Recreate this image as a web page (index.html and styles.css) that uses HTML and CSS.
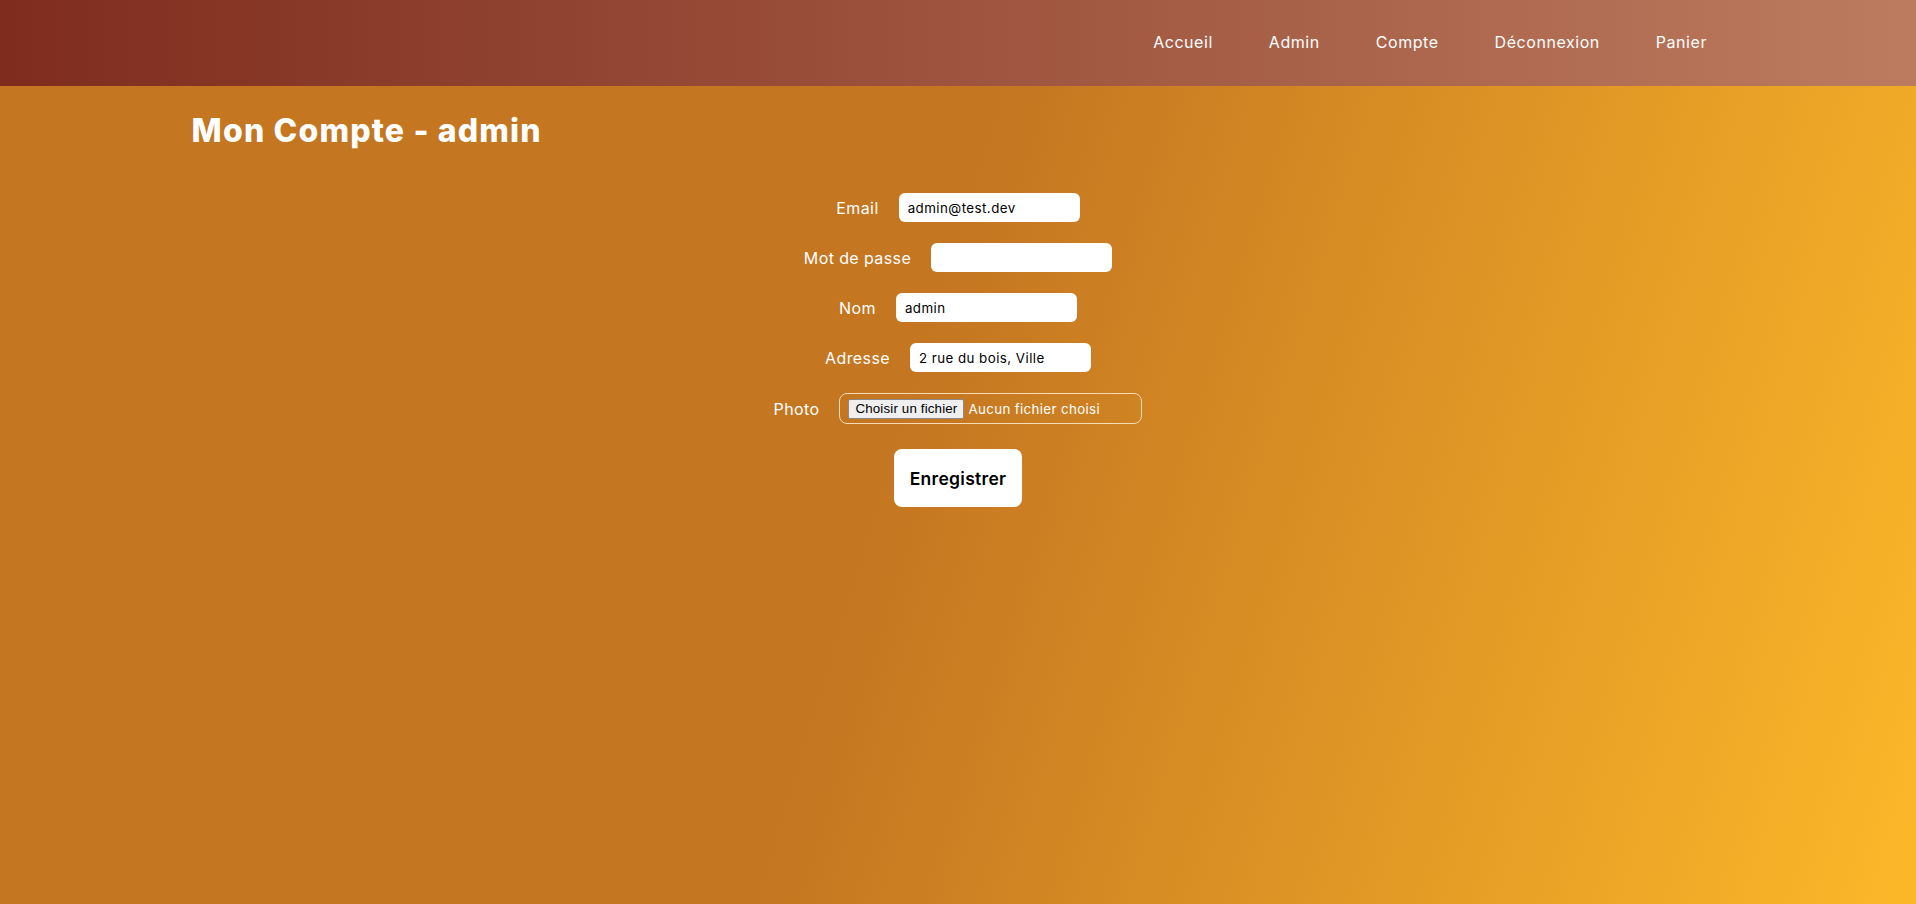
FILE: index.html
```html
<!DOCTYPE html>
<html lang="fr">
<head>
<meta charset="utf-8">
<title>Mon Compte - admin</title>
<link rel="stylesheet" href="styles.css">
</head>
<body>
<div class="page">
  <header class="topbar">
    <nav class="nav">
      <a class="nav-link" href="#">Accueil</a>
      <a class="nav-link" href="#">Admin</a>
      <a class="nav-link" href="#">Compte</a>
      <a class="nav-link" href="#">Déconnexion</a>
      <a class="nav-link" href="#">Panier</a>
    </nav>
  </header>
  <main class="content">
    <h1 class="title">Mon Compte - admin</h1>
    <form class="account-form">
      <div class="row">
        <label class="row-label" for="email">Email</label>
        <input class="text-input" id="email" type="email" value="admin@test.dev">
      </div>
      <div class="row">
        <label class="row-label" for="pass">Mot de passe</label>
        <input class="text-input" id="pass" type="password" value="">
      </div>
      <div class="row">
        <label class="row-label" for="nom">Nom</label>
        <input class="text-input" id="nom" type="text" value="admin">
      </div>
      <div class="row">
        <label class="row-label" for="adresse">Adresse</label>
        <input class="text-input" id="adresse" type="text" value="2 rue du bois, Ville">
      </div>
      <div class="row">
        <span class="row-label">Photo</span>
        <label class="file-box">
          <input class="file-hidden" type="file">
          <span class="file-btn">Choisir un fichier</span>
          <span class="file-name">Aucun fichier choisi</span>
        </label>
      </div>
      <button class="save-btn" type="button">Enregistrer</button>
    </form>
  </main>
</div>
</body>
</html>
```

FILE: styles.css
```css
html, body {
  margin: 0;
  padding: 0;
  height: 100%;
}

body {
  font-family: Inter, "Noto Sans", sans-serif;
  color: #fff;
}

.page {
  min-height: 100vh;
  background: linear-gradient(107deg, #c47621 0%, #c47621 47%, #fdb829 100%);
}

.topbar {
  height: 86px;
  box-sizing: border-box;
  display: flex;
  justify-content: flex-end;
  align-items: center;
  padding: 0 209px 2px 0;
  background: linear-gradient(to right, #7f2c1e, #bc7b5e);
}

.nav {
  display: flex;
  gap: 56px;
}

.nav-link {
  color: #fff;
  text-decoration: none;
  font-size: 16px;
  letter-spacing: 0.55px;
}

.content {
  width: 80%;
  margin: 0 auto;
}

.title {
  margin: 26px 0 0;
  font-size: 32px;
  line-height: 38px;
  font-weight: 800;
  letter-spacing: 1.15px;
}

.account-form {
  margin-top: 43px;
  display: flex;
  flex-direction: column;
  align-items: center;
  gap: 21px;
}

.row {
  display: flex;
  align-items: center;
  gap: 20px;
}

.row-label {
  font-size: 16px;
  color: #fff;
  letter-spacing: 0.4px;
}

.text-input {
  width: 181px;
  height: 29px;
  box-sizing: border-box;
  border: none;
  border-radius: 6px;
  padding: 0 9px;
  background: #fff;
  color: #000;
  font-family: Inter, "Noto Sans", sans-serif;
  font-size: 13.33px;
  letter-spacing: 0.45px;
  outline: none;
}

.file-box {
  width: 303px;
  height: 31px;
  box-sizing: border-box;
  display: flex;
  align-items: center;
  gap: 4px;
  padding: 0 8px;
  border: 1px solid #f6dcb6;
  border-radius: 8px;
  cursor: pointer;
}

.file-hidden {
  display: none;
}

.file-btn {
  box-sizing: border-box;
  height: 20px;
  display: flex;
  align-items: center;
  padding: 0 6px;
  background: #efefef;
  border: 1px solid #8a8a8a;
  border-radius: 2px;
  color: #000;
  font-family: "Liberation Sans", Arial, sans-serif;
  font-size: 13.33px;
  letter-spacing: 0.15px;
}

.file-name {
  color: #fff;
  font-size: 13.33px;
  letter-spacing: 0.35px;
}

.save-btn {
  margin-top: 4px;
  height: 58px;
  padding: 0 16px;
  border: none;
  border-radius: 8px;
  background: #fff;
  color: #000;
  font-family: Inter, "Noto Sans", sans-serif;
  font-size: 17.5px;
  font-weight: 600;
  letter-spacing: 0.3px;
  cursor: pointer;
}
```
